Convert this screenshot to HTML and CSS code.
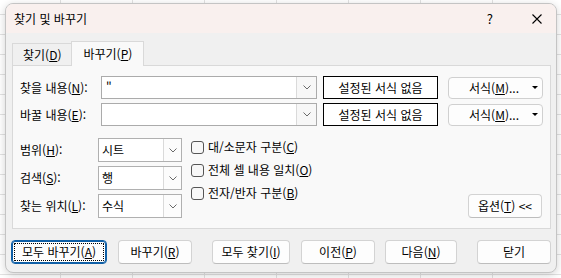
FILE: index.html
```html
<!DOCTYPE html>
<html lang="ko">
<head>
    <meta charset="UTF-8">
    <meta name="viewport" content="width=device-width, initial-scale=1.0">
    <title>찾기 및 바꾸기</title>
    <link rel="stylesheet" href="styles.css">
</head>
<body>
    <div class="dialog">
        <div class="titlebar">
            <span class="title">찾기 및 바꾸기</span>
            <span class="help">?</span>
            <span class="close">
                <svg width="10" height="10" viewBox="0 0 10 10"><path d="M0.5 0.5 L9.5 9.5 M9.5 0.5 L0.5 9.5" stroke="#000" stroke-width="1.1" fill="none"/></svg>
            </span>
        </div>
        <div class="content">
            <div class="tabs">
                <div class="tab">찾기(<u>D</u>)</div>
                <div class="tab tab-active">바꾸기(<u>P</u>)</div>
            </div>
            <div class="panel">
                <div class="fields">
                    <div class="label">찾을 내용(<u>N</u>):</div>
                    <div class="combo">
                        <span class="combo-value">"</span>
                        <span class="arrow"><svg width="8" height="5" viewBox="0 0 8 5"><path d="M0.5 0.5 L4 4 L7.5 0.5" stroke="#6a6a6a" fill="none"/></svg></span>
                    </div>
                    <div class="preview">설정된 서식 없음</div>
                    <div class="fmt-btn">서식(<u>M</u>)... <span class="caret"></span></div>

                    <div class="label">바꿀 내용(<u>E</u>):</div>
                    <div class="combo">
                        <span class="combo-value"></span>
                        <span class="arrow"><svg width="8" height="5" viewBox="0 0 8 5"><path d="M0.5 0.5 L4 4 L7.5 0.5" stroke="#6a6a6a" fill="none"/></svg></span>
                    </div>
                    <div class="preview">설정된 서식 없음</div>
                    <div class="fmt-btn">서식(<u>M</u>)... <span class="caret"></span></div>
                </div>

                <div class="options">
                    <div class="selects">
                        <div class="label">범위(<u>H</u>):</div>
                        <div class="select"><span class="select-value">시트</span><span class="arrow"><svg width="8" height="5" viewBox="0 0 8 5"><path d="M0.5 0.5 L4 4 L7.5 0.5" stroke="#6a6a6a" fill="none"/></svg></span></div>
                        <div class="label">검색(<u>S</u>):</div>
                        <div class="select"><span class="select-value">행</span><span class="arrow"><svg width="8" height="5" viewBox="0 0 8 5"><path d="M0.5 0.5 L4 4 L7.5 0.5" stroke="#6a6a6a" fill="none"/></svg></span></div>
                        <div class="label">찾는 위치(<u>L</u>):</div>
                        <div class="select"><span class="select-value">수식</span><span class="arrow"><svg width="8" height="5" viewBox="0 0 8 5"><path d="M0.5 0.5 L4 4 L7.5 0.5" stroke="#6a6a6a" fill="none"/></svg></span></div>
                    </div>
                    <div class="checks">
                        <div class="check"><span class="box"></span>대/소문자 구분(<u>C</u>)</div>
                        <div class="check"><span class="box"></span>전체 셀 내용 일치(<u>O</u>)</div>
                        <div class="check"><span class="box"></span>전자/반자 구분(<u>B</u>)</div>
                    </div>
                    <div class="btn opt-btn">옵션(<u>T</u>) &lt;&lt;</div>
                </div>
            </div>

            <div class="actions">
                <div class="btn btn-focus btn-wide">모두 바꾸기(<u>A</u>)</div>
                <div class="btn">바꾸기(<u>R</u>)</div>
                <div class="btn btn-findall group-start">모두 찾기(<u>I</u>)</div>
                <div class="btn">이전(<u>P</u>)</div>
                <div class="btn btn-next">다음(<u>N</u>)</div>
                <div class="btn group-start">닫기</div>
            </div>
        </div>
    </div>
</body>
</html>
```

FILE: styles.css
```css
* {
    margin: 0;
    padding: 0;
    box-sizing: border-box;
}
body {
    width: 561px;
    height: 278px;
    overflow: hidden;
    padding: 3px 0 0 5px;
    font-family: "Noto Sans CJK KR", "Noto Sans", sans-serif;
    font-size: 12px;
    line-height: 16px;
    color: #000;
    background-color: #fff;
    background-image:
        linear-gradient(to right, #e2e2e2 1px, transparent 1px),
        linear-gradient(to bottom, #e2e2e2 1px, transparent 1px);
    background-size: 72px 20px;
    background-position: 60px 0, 0 14px;
}
u {
    text-decoration: underline;
    text-underline-offset: 1px;
}

.dialog {
    width: 552px;
    height: 270px;
    background: #f0f0f0;
    border: 1px solid #c4c4c4;
    border-radius: 8px;
    overflow: hidden;
    box-shadow: 0 2px 8px rgba(0, 0, 0, .18);
}

.titlebar {
    height: 29px;
    background: #f9f0ee;
    display: flex;
    align-items: center;
    padding-left: 8px;
}
.title {
    flex: 1;
    padding-top: 1px;
}
.help {
    font-size: 13px;
    margin-right: 39px;
}
.close {
    display: flex;
    margin-right: 14px;
}

.content {
    padding: 8px 5px 0 6px;
}

.tabs {
    display: flex;
    align-items: flex-end;
    height: 24px;
}
.tab {
    height: 22px;
    padding: 0 10px;
    border: 1px solid #d9d9d9;
    border-bottom: none;
    display: flex;
    align-items: center;
    background: #f0f0f0;
}
.tab-active {
    height: 25px;
    margin-bottom: -1px;
    margin-left: -1px;
    padding: 0 11px;
    background: #f9f9f9;
    position: relative;
    z-index: 1;
}

.panel {
    background: #f9f9f9;
    border: 1px solid #d9d9d9;
    padding: 10px 7px 10px 7px;
}

.fields {
    display: grid;
    grid-template-columns: 81px 216px 121px 105px;
    grid-auto-rows: 23px;
    row-gap: 4px;
    align-items: center;
}
.label {
    white-space: nowrap;
}
.combo, .select {
    height: 23px;
    background: #fff;
    border: 1px solid #ababab;
    display: flex;
}
.combo-value {
    flex: 1;
    padding: 2px 0 0 4px;
}
.arrow {
    width: 20px;
    border-left: 1px solid #dadada;
    background: #f7f7f7;
    display: flex;
    align-items: center;
    justify-content: center;
}
.preview {
    margin-left: 6px;
    height: 23px;
    border: 1px solid #000;
    display: flex;
    align-items: center;
    justify-content: center;
    background: #fff;
}
.fmt-btn {
    margin-left: 10px;
    height: 22px;
    border: 1px solid #d0d0d0;
    border-radius: 4px;
    background: #fdfdfd;
    display: flex;
    align-items: center;
    padding-left: 20px;
}
.caret {
    margin-left: auto;
    margin-right: 4px;
    width: 0;
    height: 0;
    border-left: 3px solid transparent;
    border-right: 3px solid transparent;
    border-top: 3px solid #000;
}

.options {
    display: flex;
    margin-top: 12px;
}
.selects {
    display: grid;
    grid-template-columns: 78px 84px;
    grid-auto-rows: 24px;
    row-gap: 4px;
    align-items: center;
}
.select {
    height: 24px;
    border-color: #b0b0b0;
}
.select-value {
    flex: 1;
    padding: 3px 0 0 3px;
}
.select .arrow {
    width: 18px;
    background: #fcfcfc;
}

.checks {
    margin: 1px 0 0 9px;
    display: flex;
    flex-direction: column;
    gap: 7px;
}
.check {
    height: 16px;
    display: flex;
    align-items: center;
}
.box {
    width: 13px;
    height: 13px;
    border: 1px solid #555;
    border-radius: 3px;
    background: #f7f7f7;
    margin-right: 4px;
}

.btn {
    width: 74px;
    height: 24px;
    border: 1px solid #d3d3d3;
    border-bottom-color: #bdbdbd;
    border-radius: 4px;
    background: #fdfdfd;
    display: flex;
    align-items: center;
    justify-content: center;
    white-space: nowrap;
}
.opt-btn {
    margin-left: auto;
    margin-right: 1px;
    align-self: flex-end;
    width: 74px;
}

.actions {
    display: flex;
    gap: 11px;
    margin: 11px 0 0 -1px;
}
.btn-wide {
    width: 96px;
}
.btn-findall {
    width: 78px;
}
.btn-next {
    width: 72px;
    margin-left: -1px;
}
.group-start {
    margin-left: 9px;
}
.btn-focus {
    border: 1px solid #0f5fa6;
    box-shadow: inset 0 0 0 1px #0f5fa6;
    outline: 1px dotted #000;
    outline-offset: -4px;
}
```
